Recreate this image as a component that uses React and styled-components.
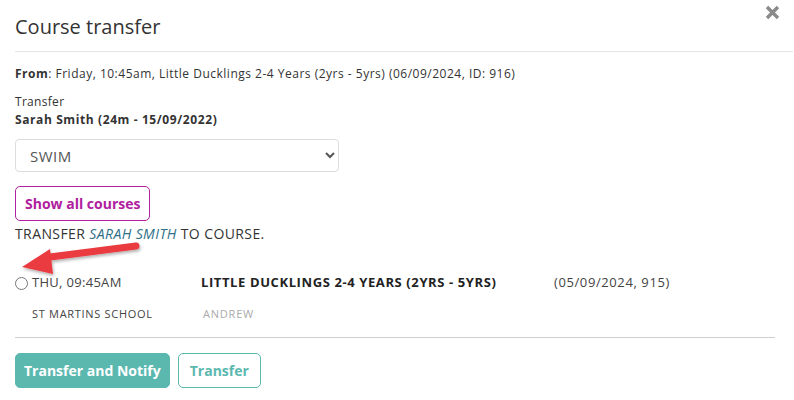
import React from 'react';
import styled, { createGlobalStyle } from 'styled-components';

const GlobalStyle = createGlobalStyle`
    body {
        margin: 0;
        background: #fff;
        font-family: "Open Sans", "Noto Sans", sans-serif;
        color: #333;
    }
`;

export default function App() {
    return (
        <Modal>
            <GlobalStyle />
            <Header>
                <Title>Course transfer</Title>
                <Close aria-label="close">
                    <svg width="15" height="15" viewBox="0 0 15 15">
                        <path d="M2 2 L13 13 M13 2 L2 13" stroke="#8a8a8a" strokeWidth="3.4" strokeLinecap="butt" />
                    </svg>
                </Close>
            </Header>
            <Body>
                <Line><b>From</b>: Friday, 10:45am, Little Ducklings 2-4 Years (2yrs - 5yrs) (06/09/2024, ID: 916)</Line>
                <Label>Transfer</Label>
                <Name>Sarah Smith (24m - 15/09/2022)</Name>
                <Select defaultValue="SWIM">
                    <option>SWIM</option>
                </Select>
                <ShowAll color="#b0209f">Show all courses</ShowAll>
                <Hint>TRANSFER <Student>SARAH SMITH</Student> TO COURSE.</Hint>
                <Courses>
                    <Time>
                        <Radio type="radio" name="course" />
                        THU, 09:45AM
                    </Time>
                    <CourseName>LITTLE DUCKLINGS 2-4 YEARS (2YRS - 5YRS)</CourseName>
                    <Info>(05/09/2024, 915)</Info>
                    <Venue>ST MARTINS SCHOOL</Venue>
                    <Teacher>ANDREW</Teacher>
                    <span />
                </Courses>
                <Rule />
                <Actions>
                    <SolidButton>Transfer and Notify</SolidButton>
                    <OutlineButton color="#5bb8af">Transfer</OutlineButton>
                </Actions>
            </Body>
            <Arrow width="130" height="42" viewBox="0 0 130 42">
                <defs>
                    <filter id="shadow" x="-20%" y="-40%" width="140%" height="180%">
                        <feDropShadow dx="1" dy="2" stdDeviation="1.5" floodColor="#000" floodOpacity="0.3" />
                    </filter>
                </defs>
                <g filter="url(#shadow)">
                    <path d="M121 8 L35 19" stroke="#ea3b40" strokeWidth="7" strokeLinecap="round" />
                    <path d="M7 29 L35 11 L38 36 Z" fill="#ea3b40" />
                </g>
            </Arrow>
        </Modal>
    );
}

const Modal = styled.div`
    position: relative;
    width: 794px;
    height: 400px;
    padding-left: 15px;
    box-sizing: border-box;
    overflow: hidden;
`;

const Header = styled.div`
    display: flex;
    align-items: center;
    height: 52px;
    margin-right: 1px;
    border-bottom: 1px solid #e6e6e6;
    box-sizing: border-box;
`;

const Title = styled.h4`
    margin: 0;
    font-size: 20px;
    font-weight: 400;
    color: #333;
    padding-top: 2px;
`;

const Close = styled.button`
    margin-left: auto;
    align-self: flex-start;
    margin-top: 5px;
    margin-right: 13px;
    padding: 0;
    border: 0;
    background: none;
    line-height: 0;
`;

const Body = styled.div`
    display: flex;
    flex-direction: column;
    align-items: flex-start;
    padding-right: 19px;
`;

const Line = styled.div`
    margin-top: 13px;
    font-size: 12px;
    line-height: 18px;
    letter-spacing: 0.5px;
    b { font-weight: 700; }
`;

const Label = styled.div`
    margin-top: 10px;
    font-size: 12px;
    line-height: 18px;
    letter-spacing: 0.3px;
`;

const Name = styled.div`
    font-size: 12px;
    line-height: 18px;
    font-weight: 700;
    letter-spacing: 0.6px;
`;

const Select = styled.select`
    margin-top: 10px;
    width: 324px;
    height: 33px;
    padding: 0 10px;
    border: 1px solid #dcdcdc;
    border-radius: 4px;
    background: #fff;
    font-family: inherit;
    font-size: 15px;
    letter-spacing: 0.5px;
    color: #555;
`;

const OutlineButton = styled.button`
    height: 35px;
    padding: 0 11px;
    border: 1px solid ${p => p.color};
    border-radius: 5px;
    background: #fff;
    color: ${p => p.color};
    font-family: inherit;
    font-size: 14px;
    font-weight: 700;
`;

const ShowAll = styled(OutlineButton)`
    margin-top: 14px;
    padding: 0 9px;
`;

const Hint = styled.div`
    margin-top: 4px;
    font-size: 14px;
    line-height: 18px;
    letter-spacing: 0.4px;
    color: #333;
`;

const Student = styled.i`
    color: #2f6f87;
`;

const Courses = styled.div`
    margin-top: 30px;
    display: grid;
    grid-template-columns: 186px 353px auto;
    row-gap: 15px;
    align-items: center;
`;

const Time = styled.div`
    display: flex;
    align-items: center;
    gap: 4px;
    font-size: 13px;
    line-height: 18px;
    letter-spacing: 0.3px;
    color: #444;
`;

const Radio = styled.input`
    margin: 2px 0 0 0;
    width: 13px;
    height: 13px;
`;

const CourseName = styled.div`
    font-size: 13px;
    font-weight: 700;
    letter-spacing: 0.6px;
    color: #222;
`;

const Info = styled.div`
    font-size: 13px;
    letter-spacing: 0.6px;
    color: #444;
`;

const Venue = styled.div`
    padding-left: 17px;
    font-size: 11px;
    line-height: 16px;
    letter-spacing: 0.7px;
    color: #444;
`;

const Teacher = styled.div`
    padding-left: 2px;
    font-size: 11px;
    line-height: 16px;
    letter-spacing: 0.8px;
    color: #aaa;
`;

const Rule = styled.hr`
    align-self: stretch;
    margin: 15px 0 0 0;
    border: 0;
    border-top: 1px solid #cfcfcf;
`;

const Actions = styled.div`
    display: flex;
    gap: 8px;
    margin-top: 15px;
`;

const SolidButton = styled.button`
    height: 35px;
    padding: 0 8px;
    border: 1px solid #5bb8af;
    border-radius: 5px;
    background: #5bb8af;
    color: #fff;
    font-family: inherit;
    font-size: 14px;
    font-weight: 700;
`;

const Arrow = styled.svg`
    position: absolute;
    left: 15px;
    top: 238px;
`;
